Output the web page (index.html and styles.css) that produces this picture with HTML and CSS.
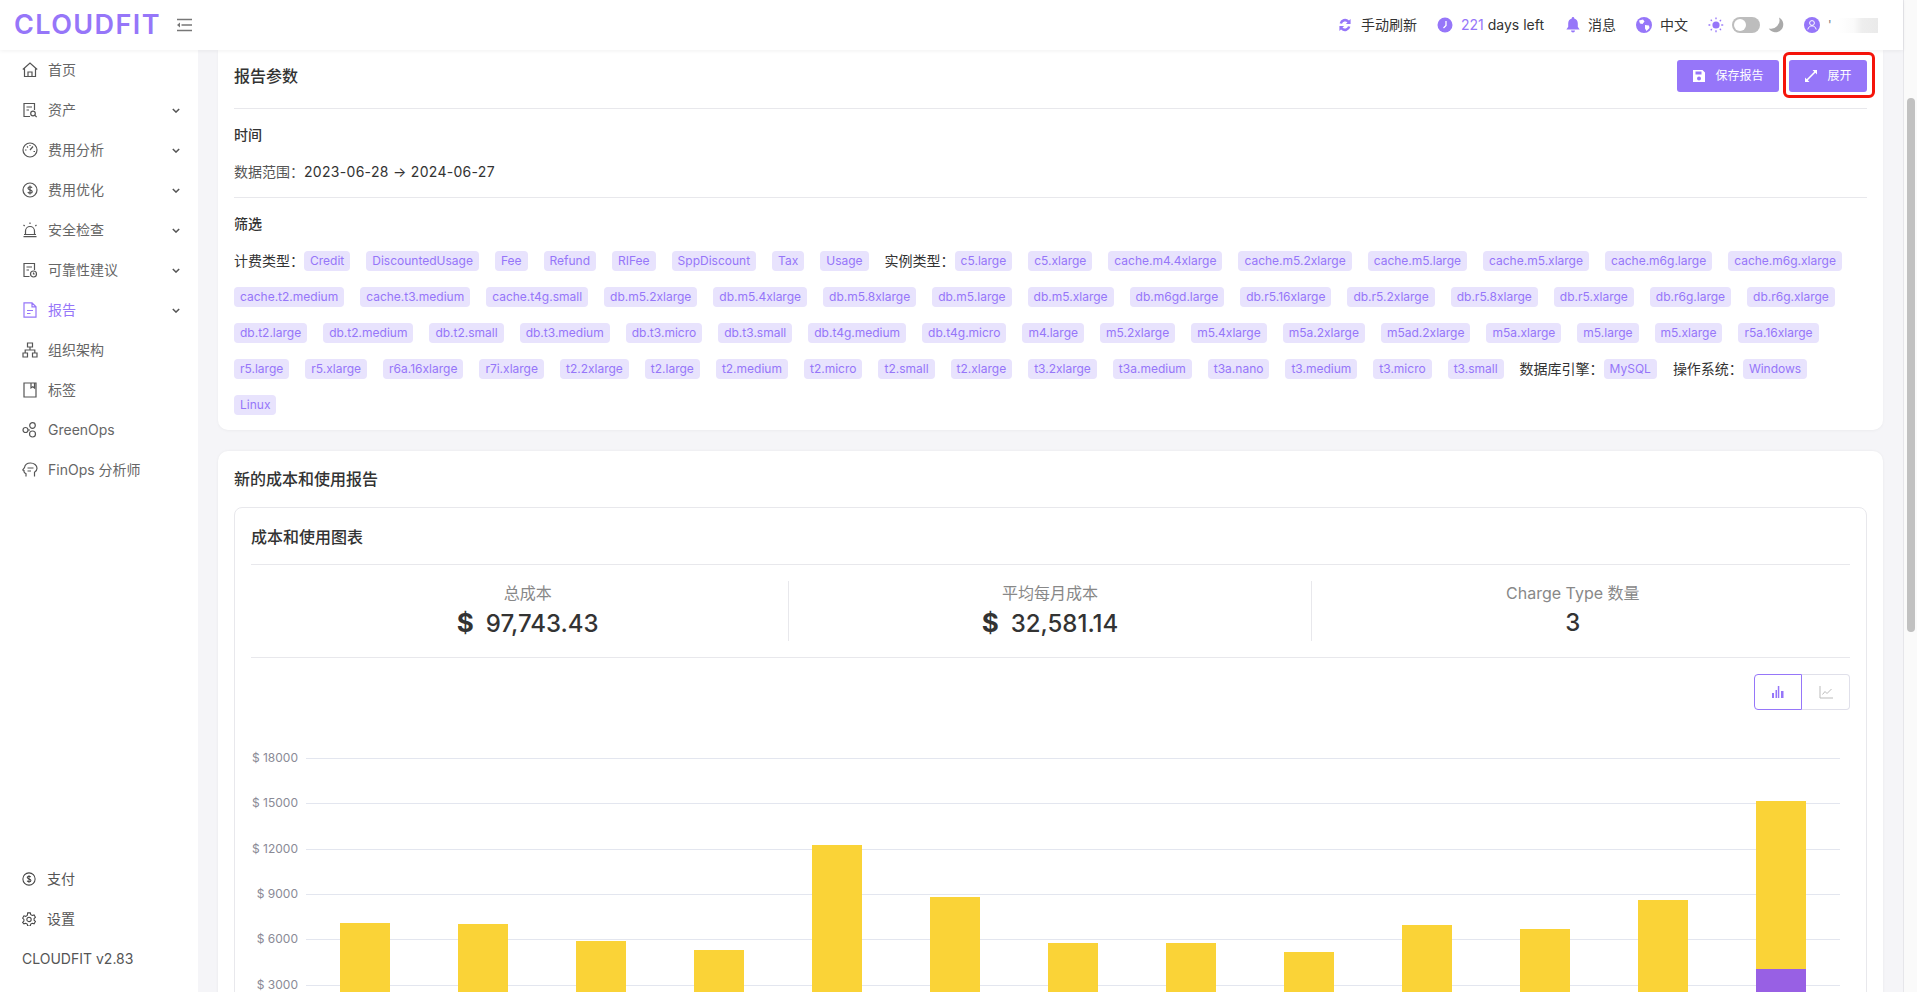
FILE: index.html
```html
<!DOCTYPE html>
<html lang="zh">
<head>
  <meta charset="UTF-8">
  <title>CLOUDFIT 报告</title>
  <link rel="stylesheet" href="styles.css">
</head>
<body>
  <div class="app">
    <div class="app__left">
      <!-- Header -->
      <header class="topbar">
        <div class="logo">CLOUDFIT</div>
        <svg class="collapse" viewBox="0 0 16 14" fill="none" stroke="#777" stroke-width="1.6"><path d="M1 1.5h15M5.5 7H16M1 12.5h15"/><path d="M4 4.5 1 7l3 2.5z" fill="#777" stroke="none"/></svg>
        <div class="topbar__right">
          <div class="topbar__item">
            <svg class="ico" viewBox="0 0 16 16" fill="#9676f9"><path d="M2.600 6.200A5.600 5.600 0 0 1 12 3.400L13.600 2v5H8.800l1.700-1.600A3.400 3.400 0 0 0 5 6.800zM13.400 9.800A5.600 5.600 0 0 1 4 12.600L2.400 14V9h4.800l-1.700 1.600A3.400 3.400 0 0 0 11 9.200z"/></svg>
            <span>手动刷新</span>
          </div>
          <div class="topbar__item topbar__item--days">
            <svg class="ico" viewBox="0 0 16 16"><circle cx="8" cy="8" r="7.500" fill="#9676f9"/><path d="M9 4v4.500L6.500 11" fill="none" stroke="#fff" stroke-width="1.300"/></svg>
            <span><span class="days">221</span> days left</span>
          </div>
          <div class="topbar__item">
            <svg class="ico ico--bell" viewBox="0 0 14 16" fill="#9676f9"><path d="M7 0a1.200 1.200 0 0 1 1.200 1.400C10.600 2 11.800 3.900 11.800 6.400v3.400L13.600 12.600H.4L2.200 9.800V6.400C2.200 3.900 3.400 2 5.800 1.400A1.200 1.200 0 0 1 7 0zM5 13.600h4a2 2 0 0 1-4 0z"/></svg>
            <span>消息</span>
          </div>
          <div class="topbar__item">
            <svg class="ico" viewBox="0 0 16 16"><circle cx="8" cy="8" r="8" fill="#9676f9"/><path d="M3 3.500 7 2.500 8.500 4.500 6.500 7 4 6.500zM9 8l4 .5.500 2.500L10.500 14 9 11.500z" fill="#fff"/></svg>
            <span>中文</span>
          </div>
          <div class="theme">
            <svg class="ico" viewBox="0 0 16 16" fill="#9676f9"><circle cx="8" cy="8" r="3.600"/><path d="M8 .5v2.200M8 13.300v2.200M.5 8h2.200M13.300 8h2.200M2.700 2.700l1.500 1.500M11.800 11.800l1.500 1.500M2.700 13.300l1.500-1.500M11.800 4.200l1.500-1.500" stroke="#9676f9" stroke-width="1.300" stroke-dasharray="1.600 .4"/></svg>
            <div class="switch"><div class="switch__knob"></div></div>
            <svg class="ico" viewBox="0 0 16 16" fill="#aaa"><path d="M11 .5A7.800 7.800 0 1 1 .8 11.500 8.500 8.500 0 0 0 11 .5z"/></svg>
          </div>
          <div class="topbar__item">
            <svg class="ico" viewBox="0 0 16 16"><circle cx="8" cy="8" r="8" fill="#9676f9"/><circle cx="8" cy="6" r="2.400" fill="none" stroke="#fff"/><path d="M3.800 12.500c.6-2.500 2.200-3.600 4.200-3.600s3.600 1.100 4.200 3.600" fill="none" stroke="#fff"/></svg>
            <div class="username"><span class="username__tick">'</span><div class="username__blur"></div></div>
          </div>
        </div>
      </header>

      <div class="app__body">
        <!-- Sidebar -->
        <aside class="sidebar">
          <nav class="menu">
            <a class="menu__item">
              <svg class="menu__ico" viewBox="0 0 16 16"><path d="M.8 7.500 8 1l7.200 6.500M2.500 6.500V14.500h11V6.500M6 14.500V10h4v4.500"/></svg>
              <span class="menu__text">首页</span>
            </a>
            <a class="menu__item">
              <svg class="menu__ico" viewBox="0 0 16 16"><path d="M8 14.500H2V1.500h10.500V8M4.500 5h5.500M4.500 8H7"/><circle cx="11" cy="11.500" r="2.300"/><path d="M12.700 13.200l2 2"/></svg>
              <span class="menu__text">资产</span>
              <svg class="chevron" viewBox="0 0 10 6"><path d="M1 1l4 4 4-4"/></svg>
            </a>
            <a class="menu__item">
              <svg class="menu__ico" viewBox="0 0 16 16"><circle cx="8" cy="8" r="7"/><path d="M8 8l3-3.500M3 8h1.500M11.500 9.500H13M5 4.500l1 1M8 3v1"/></svg>
              <span class="menu__text">费用分析</span>
              <svg class="chevron" viewBox="0 0 10 6"><path d="M1 1l4 4 4-4"/></svg>
            </a>
            <a class="menu__item">
              <svg class="menu__ico" viewBox="0 0 16 16"><circle cx="8" cy="8" r="7"/><path d="M10 5.800C9.500 5 8.800 4.800 8 4.800c-1.200 0-2 .6-2 1.500 0 2 4.200 1.200 4.200 3.300 0 1-.9 1.600-2.200 1.600-.9 0-1.700-.3-2.200-1.100M8 3.600v8.800"/></svg>
              <span class="menu__text">费用优化</span>
              <svg class="chevron" viewBox="0 0 10 6"><path d="M1 1l4 4 4-4"/></svg>
            </a>
            <a class="menu__item">
              <svg class="menu__ico" viewBox="0 0 16 16"><path d="M3.500 12.500V9a4.500 4.500 0 0 1 9 0v3.500M1.500 14.700h13M2 12.500h12M8 .5v1.500M1.500 3l1.200 1M14.500 3l-1.200 1"/></svg>
              <span class="menu__text">安全检查</span>
              <svg class="chevron" viewBox="0 0 10 6"><path d="M1 1l4 4 4-4"/></svg>
            </a>
            <a class="menu__item">
              <svg class="menu__ico" viewBox="0 0 16 16"><path d="M7.500 14.500H2V1.500h10.500V8M4.500 5h5.500M4.500 8H7"/><circle cx="11.500" cy="12" r="3"/><path d="M11.500 10.500V12h1.200"/></svg>
              <span class="menu__text">可靠性建议</span>
              <svg class="chevron" viewBox="0 0 10 6"><path d="M1 1l4 4 4-4"/></svg>
            </a>
            <a class="menu__item menu__item--active">
              <svg class="menu__ico" viewBox="0 0 16 16"><path d="M2 .8h8l4 4v10.400H2zM10 .8v4h4M5 8.500h6M5 11.500h3.500"/></svg>
              <span class="menu__text">报告</span>
              <svg class="chevron" viewBox="0 0 10 6"><path d="M1 1l4 4 4-4"/></svg>
            </a>
            <a class="menu__item">
              <svg class="menu__ico" viewBox="0 0 16 16"><path d="M5.500 1h5v4h-5zM1 11h4.500v4H1zM10.500 11H15v4h-4.500zM8 5v3M3.200 11V8h9.600v3"/></svg>
              <span class="menu__text">组织架构</span>
            </a>
            <a class="menu__item">
              <svg class="menu__ico" viewBox="0 0 16 16"><path d="M2 1h12v14H2zM9 1v5l1.800-1.200L12.500 6V1"/></svg>
              <span class="menu__text">标签</span>
            </a>
            <a class="menu__item">
              <svg class="menu__ico" viewBox="0 0 16 16"><circle cx="3.500" cy="8" r="2.500"/><circle cx="10.500" cy="3.500" r="2.800"/><circle cx="10.500" cy="12" r="3"/><path d="M6 8h2"/></svg>
              <span class="menu__text">GreenOps</span>
            </a>
            <a class="menu__item">
              <svg class="menu__ico" viewBox="0 0 16 16"><path d="M4 14.500v-2.800C2 10.800 1.800 9.300 2 8.500L.8 8 2.500 5.500C3 2.800 5.500 1 8.500 1c3.500 0 6.500 2.300 6.500 5.300 0 2-1 3.200-2.500 4v4.200M5.500 6h6M5.500 9h3.500"/></svg>
              <span class="menu__text">FinOps 分析师</span>
            </a>
          </nav>
          <div class="sidebar__foot">
            <a class="foot__item">
              <svg class="foot__ico" viewBox="0 0 16 16"><circle cx="8" cy="8" r="7"/><path d="M10 5.800C9.500 5 8.800 4.800 8 4.800c-1.200 0-2 .6-2 1.500 0 2 4.200 1.200 4.200 3.300 0 1-.9 1.600-2.200 1.600-.9 0-1.700-.3-2.200-1.100M8 3.600v8.800"/></svg>
              <span>支付</span>
            </a>
            <a class="foot__item">
              <svg class="foot__ico" viewBox="0 0 16 16"><path d="M6.500 1h3l.5 2 1.800 1 2-.6 1.500 2.600-1.500 1.500v1.900l1.500 1.400-1.500 2.700-2-.6-1.800 1-.5 2h-3l-.5-2-1.800-1-2 .6L.7 11.800l1.500-1.400V8.500L.7 7l1.500-2.600 2 .6L6 4z"/><circle cx="8" cy="8.500" r="2.500"/></svg>
              <span>设置</span>
            </a>
            <div class="foot__version">CLOUDFIT v2.83</div>
          </div>
        </aside>

        <!-- Content -->
        <main class="main">
          <section class="card card--params">
            <div class="card__head">
              <h2 class="card__title">报告参数</h2>
              <div class="card__actions">
                <button class="btn btn--save">
                  <svg class="btn__ico" viewBox="0 0 14 14" fill="#fff"><path d="M1 1h9.500L13 3.500V13H1zM3.500 2.500V5.500h6V2.500zM7 7.500a2 2 0 1 0 0 4 2 2 0 0 0 0-4z"/></svg>
                  保存报告
                </button>
                <button class="btn">
                  <svg class="btn__ico" viewBox="0 0 14 14" fill="#fff"><path d="M8.500 1H13v4.500L11.300 3.800 3.800 11.300 5.500 13H1V8.500l1.700 1.700 7.500-7.500z"/></svg>
                  展开
                </button>
              </div>
            </div>
            <div class="params__block params__block--time">
              <h3 class="params__title">时间</h3>
              <p class="params__range"><span class="params__label">数据范围：</span><span class="params__dates">2023-06-28 → 2024-06-27</span></p>
            </div>
            <div class="params__block">
              <h3 class="params__title">筛选</h3>
              <div class="tags">
                <span class="tags__label">计费类型：</span>
                <span class="tag">Credit</span>
                <span class="tag">DiscountedUsage</span>
                <span class="tag">Fee</span>
                <span class="tag">Refund</span>
                <span class="tag">RIFee</span>
                <span class="tag">SppDiscount</span>
                <span class="tag">Tax</span>
                <span class="tag">Usage</span>
                <span class="tags__label">实例类型：</span>
                <span class="tag">c5.large</span>
                <span class="tag">c5.xlarge</span>
                <span class="tag">cache.m4.4xlarge</span>
                <span class="tag">cache.m5.2xlarge</span>
                <span class="tag">cache.m5.large</span>
                <span class="tag">cache.m5.xlarge</span>
                <span class="tag">cache.m6g.large</span>
                <span class="tag">cache.m6g.xlarge</span>
                <span class="tag">cache.t2.medium</span>
                <span class="tag">cache.t3.medium</span>
                <span class="tag">cache.t4g.small</span>
                <span class="tag">db.m5.2xlarge</span>
                <span class="tag">db.m5.4xlarge</span>
                <span class="tag">db.m5.8xlarge</span>
                <span class="tag">db.m5.large</span>
                <span class="tag">db.m5.xlarge</span>
                <span class="tag">db.m6gd.large</span>
                <span class="tag">db.r5.16xlarge</span>
                <span class="tag">db.r5.2xlarge</span>
                <span class="tag">db.r5.8xlarge</span>
                <span class="tag">db.r5.xlarge</span>
                <span class="tag">db.r6g.large</span>
                <span class="tag">db.r6g.xlarge</span>
                <span class="tag">db.t2.large</span>
                <span class="tag">db.t2.medium</span>
                <span class="tag">db.t2.small</span>
                <span class="tag">db.t3.medium</span>
                <span class="tag">db.t3.micro</span>
                <span class="tag">db.t3.small</span>
                <span class="tag">db.t4g.medium</span>
                <span class="tag">db.t4g.micro</span>
                <span class="tag">m4.large</span>
                <span class="tag">m5.2xlarge</span>
                <span class="tag">m5.4xlarge</span>
                <span class="tag">m5a.2xlarge</span>
                <span class="tag">m5ad.2xlarge</span>
                <span class="tag">m5a.xlarge</span>
                <span class="tag">m5.large</span>
                <span class="tag">m5.xlarge</span>
                <span class="tag">r5a.16xlarge</span>
                <span class="tag">r5.large</span>
                <span class="tag">r5.xlarge</span>
                <span class="tag">r6a.16xlarge</span>
                <span class="tag">r7i.xlarge</span>
                <span class="tag">t2.2xlarge</span>
                <span class="tag">t2.large</span>
                <span class="tag">t2.medium</span>
                <span class="tag">t2.micro</span>
                <span class="tag">t2.small</span>
                <span class="tag">t2.xlarge</span>
                <span class="tag">t3.2xlarge</span>
                <span class="tag">t3a.medium</span>
                <span class="tag">t3a.nano</span>
                <span class="tag">t3.medium</span>
                <span class="tag">t3.micro</span>
                <span class="tag">t3.small</span>
                <span class="tags__label">数据库引擎：</span>
                <span class="tag">MySQL</span>
                <span class="tags__label">操作系统：</span>
                <span class="tag">Windows</span>
                <span class="tag">Linux</span>
              </div>
            </div>
          </section>

          <section class="card card--report">
            <h2 class="card__title card__title--report">新的成本和使用报告</h2>
            <div class="panel">
              <h3 class="panel__title">成本和使用图表</h3>
              <div class="stats">
                <div class="stat">
                  <div class="stat__label">总成本</div>
                  <div class="stat__value"><span class="stat__unit">$</span>97,743.43</div>
                </div>
                <div class="stat">
                  <div class="stat__label">平均每月成本</div>
                  <div class="stat__value"><span class="stat__unit">$</span>32,581.14</div>
                </div>
                <div class="stat">
                  <div class="stat__label">Charge Type 数量</div>
                  <div class="stat__value">3</div>
                </div>
              </div>
              <div class="chart-tools">
                <div class="seg seg--on">
                  <svg class="seg__ico" viewBox="0 0 14 14" fill="#9676f9"><path d="M1 8h2v5H1zM4.500 5h1.500v8H4.500zM6.800 1h1.500v12H6.800zM10 6h2.500v7H10z"/></svg>
                </div>
                <div class="seg">
                  <svg class="seg__ico" viewBox="0 0 14 14" fill="none" stroke="#bbb"><path d="M1 1v12h13M3.500 9.500 6 6.500l2 2L12.500 4"/></svg>
                </div>
              </div>
              <svg class="chart" width="1599" height="300" viewBox="0 0 1599 300">
                <line class="chart__grid" x1="55" x2="1589" y1="28.500" y2="28.500"/>
                <line class="chart__grid" x1="55" x2="1589" y1="73.500" y2="73.500"/>
                <line class="chart__grid" x1="55" x2="1589" y1="119.500" y2="119.500"/>
                <line class="chart__grid" x1="55" x2="1589" y1="164.500" y2="164.500"/>
                <line class="chart__grid" x1="55" x2="1589" y1="209.500" y2="209.500"/>
                <line class="chart__grid" x1="55" x2="1589" y1="255.500" y2="255.500"/>
                <text class="chart__label" x="47" y="32">$ 18000</text>
                <text class="chart__label" x="47" y="77">$ 15000</text>
                <text class="chart__label" x="47" y="123">$ 12000</text>
                <text class="chart__label" x="47" y="168">$ 9000</text>
                <text class="chart__label" x="47" y="213">$ 6000</text>
                <text class="chart__label" x="47" y="259">$ 3000</text>
                <rect class="chart__bar" x="89" y="193" width="50" height="107"/>
                <rect class="chart__bar" x="207" y="194" width="50" height="106"/>
                <rect class="chart__bar" x="325" y="211" width="50" height="89"/>
                <rect class="chart__bar" x="443" y="220" width="50" height="80"/>
                <rect class="chart__bar" x="561" y="115" width="50" height="185"/>
                <rect class="chart__bar" x="679" y="167" width="50" height="133"/>
                <rect class="chart__bar" x="797" y="213" width="50" height="87"/>
                <rect class="chart__bar" x="915" y="213" width="50" height="87"/>
                <rect class="chart__bar" x="1033" y="222" width="50" height="78"/>
                <rect class="chart__bar" x="1151" y="195" width="50" height="105"/>
                <rect class="chart__bar" x="1269" y="199" width="50" height="101"/>
                <rect class="chart__bar" x="1387" y="170" width="50" height="130"/>
                <rect class="chart__bar" x="1505" y="71" width="50" height="229"/>
                <rect class="chart__bar chart__bar--alt" x="1505" y="239" width="50" height="61"/>
              </svg>
            </div>
          </section>
        </main>
      </div>
    </div>

    <!-- Scrollbar -->
    <div class="rail"><div class="rail__thumb"></div></div>
  </div>

  <!-- Red highlight around the expand button -->
  <div class="highlight"></div>
</body>
</html>
```

FILE: styles.css
```css
* {
  box-sizing: border-box;
}

html,
body {
  height: 100%;
  margin: 0;
  overflow: hidden;
}

body {
  font: 14px/20px Inter, "Noto Sans CJK SC", sans-serif;
  color: #333;
  background: #f5f5f8;
}

h2,
h3,
p {
  margin: 0;
}

.app {
  display: flex;
  height: 100%;
}

.app__left {
  flex: 1;
  min-width: 0;
  display: flex;
  flex-direction: column;
}

.app__body {
  flex: 1;
  min-height: 0;
  display: flex;
}

/* Header */
.topbar {
  flex: none;
  position: relative;
  z-index: 2;
  display: flex;
  align-items: center;
  height: 50px;
  padding: 0 25px 0 14px;
  background: #fff;
  box-shadow: 0 1px 4px rgba(0, 0, 0, 0.06);
}

.logo {
  width: 162px;
  font: 600 27px/30px Inter, sans-serif;
  letter-spacing: 1.4px;
  color: #9676f9;
}

.collapse {
  width: 16px;
  height: 14px;
}

.topbar__right {
  margin-left: auto;
  display: flex;
  align-items: center;
  gap: 20px;
}

.topbar__item {
  display: flex;
  align-items: center;
  gap: 8px;
}

.topbar__item--days {
  margin-right: 2px;
}

.ico {
  width: 16px;
  height: 16px;
  flex: none;
}

.ico--bell {
  width: 14px;
}

.days {
  color: #9676f9;
}

.theme {
  display: flex;
  align-items: center;
  gap: 8px;
}

.switch {
  width: 28px;
  height: 16px;
  padding: 2px;
  border-radius: 8px;
  background: #bdbdbd;
}

.switch__knob {
  width: 12px;
  height: 12px;
  border-radius: 50%;
  background: #fff;
}

.username {
  display: flex;
  align-items: center;
  width: 50px;
  height: 16px;
  color: #777;
}

.username__tick {
  width: 10px;
  font-size: 12px;
}

.username__blur {
  flex: 1;
  height: 15px;
  background: linear-gradient(90deg, #fff 0%, #fafafa 40%, #eee 60%, #eaeaea 100%);
}

/* Sidebar */
.sidebar {
  flex: none;
  width: 198px;
  display: flex;
  flex-direction: column;
  justify-content: space-between;
  background: #fff;
}

.menu__item {
  display: flex;
  align-items: center;
  height: 40px;
  padding: 0 18px 0 22px;
  color: #666;
}

.menu__item--active {
  color: #9676f9;
}

.menu__ico {
  width: 16px;
  height: 16px;
  flex: none;
  fill: none;
  stroke: #555;
  stroke-width: 1.2;
}

.menu__item--active .menu__ico {
  stroke: #9676f9;
}

.menu__text {
  margin-left: 10px;
}

.chevron {
  width: 8px;
  height: 5px;
  margin-left: auto;
  fill: none;
  stroke: #555;
  stroke-width: 1.8;
}

.sidebar__foot {
  padding-bottom: 13px;
}

.foot__item {
  display: flex;
  align-items: center;
  gap: 11px;
  height: 40px;
  padding-left: 22px;
  color: #555;
}

.foot__ico {
  width: 14px;
  height: 14px;
  flex: none;
  fill: none;
  stroke: #444;
  stroke-width: 1.2;
}

.foot__version {
  height: 40px;
  line-height: 40px;
  padding-left: 22px;
  color: #555;
}

/* Main */
.main {
  flex: 1;
  min-width: 0;
  overflow: hidden;
  padding: 0 20px;
}

.card {
  background: #fff;
  padding: 0 16px;
}

.card--params {
  height: 380px;
  border-radius: 0 0 10px 10px;
  box-shadow: 0 1px 3px rgba(0, 0, 0, 0.04);
}

.card--report {
  margin-top: 21px;
  border-radius: 10px 10px 0 0;
  box-shadow: 0 0 3px rgba(0, 0, 0, 0.06);
}

.card__head {
  display: flex;
  align-items: center;
  justify-content: space-between;
  height: 59px;
  padding: 10px 0 16px;
  border-bottom: 1px solid #e8e8ec;
}

.card__title {
  font-size: 16px;
  font-weight: 500;
  line-height: 24px;
}

.card__actions {
  display: flex;
  gap: 10px;
}

.btn {
  display: flex;
  align-items: center;
  justify-content: center;
  gap: 9px;
  width: 78px;
  height: 32px;
  border: 0;
  border-radius: 3px;
  font: 12px/20px Inter, "Noto Sans CJK SC", sans-serif;
  color: #fff;
  background: #9676f9;
}

.btn--save {
  width: 102px;
}

.btn__ico {
  width: 14px;
  height: 14px;
}

.params__block {
  padding: 16px 0 15px;
}

.params__block--time {
  border-bottom: 1px solid #e8e8ec;
}

.params__title {
  font-size: 14px;
  font-weight: 500;
}

.params__range {
  margin-top: 17px;
}

.params__label {
  color: #555;
}

.params__dates {
  letter-spacing: 0.3px;
}

.tags {
  display: flex;
  flex-wrap: wrap;
  align-items: center;
  margin-top: 17px;
}

.tags__label {
  height: 20px;
  margin-bottom: 16px;
  white-space: nowrap;
}

.tag {
  height: 20px;
  margin: 0 16px 16px 0;
  padding: 0 6px;
  border-radius: 4px;
  font-size: 12px;
  line-height: 20px;
  color: #9676f9;
  background: #e8e3fd;
  white-space: nowrap;
}

/* Report card */
.card__title--report {
  height: 56px;
  padding-top: 16px;
}

.panel {
  height: 600px;
  padding: 0 16px;
  border: 1px solid #e8e8ec;
  border-radius: 8px;
}

.panel__title {
  height: 57px;
  padding-top: 17px;
  font-size: 16px;
  font-weight: 500;
  line-height: 24px;
  border-bottom: 1px solid #e8e8ec;
}

.stats {
  display: grid;
  grid-template-columns: repeat(3, 1fr);
  padding: 16px;
  border-bottom: 1px solid #e8e8ec;
}

.stat {
  height: 60px;
  text-align: center;
  border-right: 1px solid #e8e8ec;
}

.stat:last-child {
  border-right: 0;
}

.stat__label {
  height: 24px;
  font-size: 16px;
  line-height: 24px;
  color: #888;
}

.stat__value {
  margin-top: 2px;
  font-size: 24px;
  font-weight: 500;
  line-height: 32px;
}

.stat__unit {
  margin-right: 12px;
  font-size: 26px;
  font-weight: 700;
}

.chart-tools {
  display: flex;
  justify-content: flex-end;
  margin-top: 16px;
}

.seg {
  display: flex;
  align-items: center;
  justify-content: center;
  width: 48px;
  height: 36px;
  border: 1px solid #e0e0ea;
  border-left: 0;
  border-radius: 0 4px 4px 0;
}

.seg--on {
  border: 1px solid #9676f9;
  border-radius: 4px 0 0 4px;
}

.seg__ico {
  width: 14px;
  height: 14px;
}

.chart {
  display: block;
  margin-top: 20px;
}

.chart__grid {
  stroke: #e3e6ef;
  stroke-width: 1;
}

.chart__label {
  font-size: 12px;
  fill: #8a8a96;
  text-anchor: end;
}

.chart__bar {
  fill: #fad337;
}

.chart__bar--alt {
  fill: #9860e4;
}

/* Scrollbar */
.rail {
  flex: none;
  width: 14px;
  padding: 98px 0 0 3px;
  border-left: 1px solid #e6e6ea;
  background: #fafafa;
}

.rail__thumb {
  width: 8px;
  height: 534px;
  border-radius: 4px;
  background: #c1c1c1;
}

/* Annotation */
.highlight {
  position: absolute;
  left: 1783px;
  top: 52px;
  width: 92px;
  height: 46px;
  border: 3px solid #f5140a;
  border-radius: 6px;
}
```
